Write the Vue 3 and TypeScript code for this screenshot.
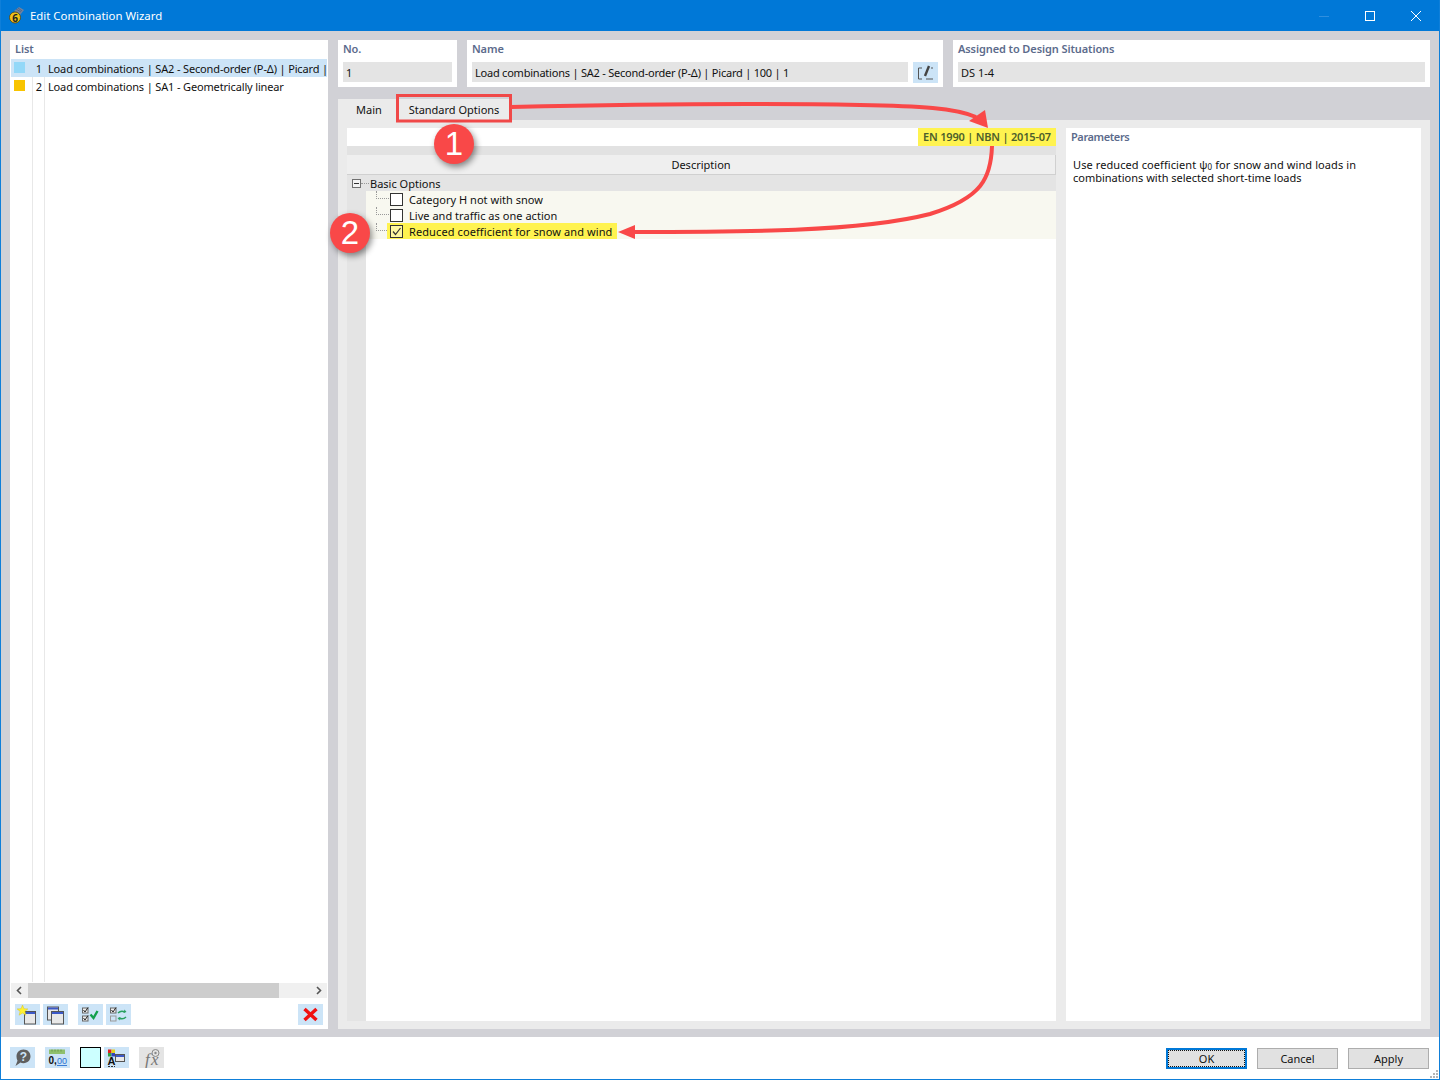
<script setup lang="ts">
const listRows = [
  { no: 1, color: '#93d8f8', text: 'Load combinations | SA2 - Second-order (P-Δ) | Picard |', active: true },
  { no: 2, color: '#f8c400', text: 'Load combinations | SA1 - Geometrically linear', active: false },
]

const options = [
  { text: 'Category H not with snow', checked: false },
  { text: 'Live and traffic as one action', checked: false },
  { text: 'Reduced coefficient for snow and wind', checked: true },
]
</script>

<template>
  <div class="window">
    <header class="titlebar">
      <svg class="app-icon" width="15" height="17" viewBox="0 0 15 17">
        <path d="M5 4L10 0l5 3-4 5z" fill="#71839f" />
        <path d="M7 2l5 3M9 1l4 3" stroke="#3f5478" stroke-width=".6" />
        <circle cx="6" cy="10.500" r="5.500" fill="#f2c21a" stroke="#4d4010" stroke-width=".8" />
        <text x="6" y="14.500" class="app-six">6</text>
      </svg>
      <span class="title">Edit Combination Wizard</span>
      <div class="win-controls">
        <svg width="12" height="12" viewBox="0 0 12 12"><path d="M1 6.500h10" stroke="#2f8fdf" /></svg>
        <svg width="12" height="12" viewBox="0 0 12 12"><rect x="1.500" y="1.500" width="9" height="9" fill="none" stroke="#fff" /></svg>
        <svg width="12" height="12" viewBox="0 0 12 12"><path d="M1 1l10 10M11 1L1 11" stroke="#fff" /></svg>
      </div>
    </header>

    <main class="body">
      <section class="list-panel">
        <div class="label list-label">List</div>
        <div class="list-rows">
          <div class="guide guide-a"></div>
          <div class="guide guide-b"></div>
          <div v-for="row in listRows" :key="row.no" class="list-row" :class="{ active: row.active }">
            <span class="swatch" :style="{ background: row.color }"></span>
            <span class="row-no">{{ row.no }}</span>
            <span class="row-text">{{ row.text }}</span>
          </div>
        </div>
        <div class="hscroll">
          <svg width="17" height="15" viewBox="0 0 17 15"><path d="M10 4L6.500 7.500 10 11" fill="none" stroke="#555" stroke-width="1.600" /></svg>
          <div class="hscroll-track"><div class="hscroll-thumb"></div></div>
          <svg width="17" height="15" viewBox="0 0 17 15"><path d="M7 4l3.500 3.500L7 11" fill="none" stroke="#555" stroke-width="1.600" /></svg>
        </div>
        <div class="list-tools">
          <button class="tool">
            <svg width="21" height="20" viewBox="0 0 21 20">
              <rect x="7.500" y="6.500" width="11" height="12.500" fill="#e8e8e8" stroke="#555" />
              <rect x="8" y="7" width="10" height="2" fill="#3c59c8" />
              <path d="M5.500 0l1.500 3.700 3.900.2-3 2.500 1 3.800-3.400-2.100-3.400 2.100 1-3.800-3-2.500 3.900-.2z" fill="#fff133" stroke="#d2bc10" stroke-width=".4" />
            </svg>
          </button>
          <button class="tool">
            <svg width="21" height="20" viewBox="0 0 21 20">
              <rect x="2.500" y="2" width="11" height="13" fill="#e8e8e8" stroke="#555" />
              <rect x="3" y="2.500" width="10" height="2" fill="#3c59c8" />
              <rect x="6.500" y="6.500" width="12" height="12.500" fill="#e8e8e8" stroke="#555" />
              <rect x="7" y="7" width="11" height="2" fill="#3c59c8" />
            </svg>
          </button>
          <button class="tool tool-gap">
            <svg width="21" height="20" viewBox="0 0 21 20">
              <rect x="2.500" y="3" width="5.500" height="5" fill="#eee" stroke="#666" />
              <path d="M3.500 5l1.500 2 3-4.500" fill="none" stroke="#222" />
              <rect x="2.500" y="11" width="5.500" height="5" fill="#eee" stroke="#666" />
              <path d="M3.500 13l1.500 2 3-4.500" fill="none" stroke="#222" />
              <path d="M10.500 9.500l3 3.500 4-7" fill="none" stroke="#12a04c" stroke-width="2.400" />
            </svg>
          </button>
          <button class="tool">
            <svg width="21" height="20" viewBox="0 0 21 20">
              <rect x="2.500" y="3" width="5.500" height="5" fill="#eee" stroke="#666" />
              <path d="M3.500 5l1.500 2 3-4.500" fill="none" stroke="#222" />
              <rect x="2.500" y="11" width="5.500" height="5" fill="none" stroke="#999" />
              <path d="M10 8c2-2 5-2 7-1M18 12c-2 2-5 2-7 1" fill="none" stroke="#2aa060" stroke-width="1.500" />
              <path d="M16.500 4.500l2 2.500-3 1zM11.500 15.500l-2-2.500 3-1z" fill="#2aa060" />
            </svg>
          </button>
          <button class="tool tool-end">
            <svg width="21" height="20" viewBox="0 0 21 20"><path d="M4.500 4l12 11M16.500 4l-12 11" stroke="#f01010" stroke-width="3.400" /></svg>
          </button>
        </div>
      </section>

      <section class="right">
        <div class="fields">
          <div class="field field-no">
            <div class="label">No.</div>
            <div class="input">1</div>
          </div>
          <div class="field field-name">
            <div class="label">Name</div>
            <div class="input-line">
              <div class="input name-input">Load combinations | SA2 - Second-order (P-Δ) | Picard | 100 | 1</div>
              <button class="tool">
                <svg width="21" height="20" viewBox="0 0 21 20">
                  <path d="M7 5H3.500v11H7M11 16h7" fill="none" stroke="#555" />
                  <path d="M14 3L10 13" stroke="#444" stroke-width="2.400" />
                  <path d="M16 5h2" stroke="#555" />
                </svg>
              </button>
            </div>
          </div>
          <div class="field field-ds">
            <div class="label">Assigned to Design Situations</div>
            <div class="input">DS 1-4</div>
          </div>
        </div>

        <nav class="tabs">
          <div class="tab tab-main">Main</div>
          <div class="tab tab-std">Standard Options</div>
        </nav>

        <div class="tab-page">
          <div class="tree-panel">
            <div class="standard-bar"><span class="standard-tag">EN 1990 | NBN | 2015-07</span></div>
            <div class="gray-bar"></div>
            <div class="col-head">Description</div>
            <div class="tree-body">
              <div class="group-row">
                <span class="expander"></span>
                <span class="dots-h"></span>
                <span>Basic Options</span>
              </div>
              <div class="group-rows">
                <div v-for="opt in options" :key="opt.text" class="opt-row">
                  <span class="dots-row"></span>
                  <span class="opt" :class="{ marked: opt.checked }">
                    <span class="check">
                      <svg v-if="opt.checked" width="11" height="11" viewBox="0 0 11 11"><path d="M2 5.500l2.500 3L9.500 2" fill="none" stroke="#333" stroke-width="1.200" /></svg>
                    </span>
                    <span>{{ opt.text }}</span>
                  </span>
                </div>
              </div>
            </div>
          </div>
          <aside class="params">
            <div class="label">Parameters</div>
            <p class="params-text">Use reduced coefficient ψ<sub>0</sub> for snow and wind loads in<br /><span class="params-line">combinations with selected short-time loads</span></p>
          </aside>
        </div>
      </section>
    </main>

    <footer class="footer">
      <button class="tool">
        <svg width="21" height="20" viewBox="0 0 21 20">
          <path d="M11.500 1.500c4.200 0 7 2.900 7 6.800s-2.900 6.900-7 6.900c-1.200 0-2.200-.2-3-.6L3.500 18l2-5.200c-.6-1.200-1-2.800-1-4.400 0-3.900 2.800-6.900 7-6.900z" fill="#5f5f5f" />
          <text x="11.500" y="13" class="help-mark">?</text>
        </svg>
      </button>
      <button class="tool">
        <svg width="21" height="20" viewBox="0 0 21 20">
          <rect x="2" y="1.500" width="16" height="4.500" fill="#8fc06e" />
          <path d="M5 1.500v2M8 1.500v2M11 1.500v2M14 1.500v2" stroke="#5e8f42" stroke-width=".8" />
          <text x="1.500" y="16" class="num-a">0,</text>
          <text x="10" y="16" class="num-b">00</text>
        </svg>
      </button>
      <span class="color-box"></span>
      <button class="tool tool-tight">
        <svg width="21" height="20" viewBox="0 0 21 20">
          <rect x="2" y="1.500" width="3.500" height="3.500" fill="#e02020" />
          <rect x="5.500" y="1.500" width="3.500" height="3.500" fill="#e0d020" />
          <rect x="2" y="5" width="3.500" height="3.500" fill="#30a040" />
          <rect x="5.500" y="5" width="3.500" height="3.500" fill="#3040c0" />
          <text x="5.500" y="16.500" class="num-c">A</text>
          <path d="M2 18.500h7" stroke="#333" stroke-dasharray="2 1" />
          <rect x="9.500" y="6.500" width="9" height="7" fill="#e8e8e8" stroke="#555" />
          <rect x="10" y="7" width="8" height="2" fill="#3c59c8" />
        </svg>
      </button>
      <button class="tool tool-off">
        <svg width="21" height="20" viewBox="0 0 21 20">
          <text x="4" y="17" class="fx">f</text>
          <text x="10" y="17" class="fx">x</text>
          <circle cx="14.500" cy="5" r="3.500" fill="none" stroke="#888" />
          <circle cx="14.500" cy="5" r="1.200" fill="#888" />
        </svg>
      </button>
      <div class="footer-actions">
        <button class="btn btn-default">OK</button>
        <button class="btn">Cancel</button>
        <button class="btn">Apply</button>
      </div>
      <svg class="grip" width="10" height="10" viewBox="0 0 10 10">
        <path d="M7 1h2v2H7zM4 4h2v2H4zM7 4h2v2H7zM1 7h2v2H1zM4 7h2v2H4zM7 7h2v2H7z" fill="#b5b5b5" />
      </svg>
    </footer>

    <svg class="arrows" width="1440" height="1080" viewBox="0 0 1440 1080">
      <rect x="397.500" y="95.500" width="113" height="25.500" fill="none" stroke="#f04848" stroke-width="3" />
      <path d="M511 107C640 104 760 103 860 105C920 106 955 108 976 117" fill="none" stroke="#f94848" stroke-width="4" />
      <path d="M988 128L969 121 985 110z" fill="#f94848" />
      <path d="M992 146C991 178 982 198 930 214C860 232 740 232 632 232" fill="none" stroke="#f94848" stroke-width="4" />
      <path d="M618 232L635 225V239z" fill="#f94848" />
    </svg>
    <div class="badge badge-1">1</div>
    <div class="badge badge-2">2</div>
  </div>
</template>

<style scoped>
.window {
  position: relative;
  width: 1440px;
  height: 1080px;
  box-sizing: border-box;
  display: flex;
  flex-direction: column;
  border: 1px solid #0f7fd9;
  border-top: none;
  background: #d1d1d6;
  font-family: "Noto Sans", "Liberation Sans", sans-serif;
  font-size: 11px;
  color: #111;
  overflow: hidden;
}

.titlebar {
  height: 31px;
  flex: none;
  margin: 0 -1px;
  display: flex;
  align-items: center;
  background: #0078d7;
  color: #fff;
  padding-left: 9px;
}

.app-icon {
  margin-right: 6px;
}

.app-six {
  font-size: 10px;
  font-weight: 700;
  text-anchor: middle;
  fill: #222;
}

.title {
  font-size: 11.4px;
}

.win-controls {
  margin-left: auto;
  display: flex;
  gap: 34px;
  padding-right: 18px;
}

.body {
  flex: 1;
  min-height: 0;
  display: flex;
  gap: 10px;
  padding: 9px 9px 8px;
}

.label {
  font-weight: 600;
  color: #5c6b8c;
  line-height: 18px;
  padding-left: 5px;
  letter-spacing: -0.1px;
}

.list-panel {
  width: 318px;
  flex: none;
  display: flex;
  flex-direction: column;
  background: #fff;
}

.list-label {
  height: 19px;
}

.list-rows {
  position: relative;
  flex: 1;
  padding: 0 1px;
}

.guide {
  position: absolute;
  top: 0;
  bottom: 0;
  width: 1px;
  background: #e8e8e8;
}

.guide-a {
  left: 22px;
}

.guide-b {
  left: 34px;
}

.list-row {
  position: relative;
  height: 18px;
  display: flex;
  align-items: center;
  white-space: nowrap;
  overflow: hidden;
}

.list-row.active {
  background: #cce4f7;
}

.swatch {
  width: 11px;
  height: 11px;
  margin: -1px 0 0 3px;
  flex: none;
}

.row-no {
  width: 17px;
  flex: none;
  text-align: right;
}

.row-text {
  margin-left: 6px;
  letter-spacing: -0.15px;
}

.hscroll {
  height: 15px;
  margin: 1px 1px 0;
  flex: none;
  display: flex;
  background: #f0f0f0;
}

.hscroll-track {
  flex: 1;
}

.hscroll-thumb {
  width: 251px;
  height: 100%;
  background: #cdcdcd;
}

.list-tools {
  height: 31px;
  flex: none;
  box-sizing: border-box;
  display: flex;
  align-items: flex-start;
  gap: 3px;
  padding: 6px 5px 0;
}

.tool {
  width: 25px;
  height: 21px;
  flex: none;
  padding: 0;
  border: none;
  background: #cce4f7;
  display: flex;
  align-items: center;
  justify-content: center;
}

.tool-gap {
  margin-left: 7px;
}

.tool-end {
  margin-left: auto;
}

.right {
  flex: 1;
  min-width: 0;
  display: flex;
  flex-direction: column;
}

.fields {
  display: flex;
  gap: 10px;
  height: 47px;
  flex: none;
}

.field {
  background: #fff;
  padding: 0 5px;
  box-sizing: border-box;
}

.field .label {
  height: 22px;
  line-height: 18px;
  padding-left: 0;
}

.field-no {
  width: 119px;
}

.field-name {
  width: 476px;
}

.field-ds {
  flex: 1;
}

.input {
  height: 20px;
  line-height: 22px;
  padding-left: 3px;
  background: #e4e4e4;
  white-space: nowrap;
}

.input-line {
  display: flex;
  gap: 5px;
}

.name-input {
  flex: 1;
  letter-spacing: -0.22px;
}

.tabs {
  height: 33px;
  flex: none;
  display: flex;
  align-items: flex-end;
}

.tab {
  height: 21px;
  line-height: 21px;
  text-align: center;
  background: #ebebeb;
}

.tab-main {
  width: 59px;
  padding-left: 3px;
  box-sizing: border-box;
}

.tab-std {
  width: 114px;
}

.tab-page {
  flex: 1;
  min-height: 0;
  display: flex;
  gap: 10px;
  padding: 8px 9px;
  background: #ebebeb;
}

.tree-panel {
  width: 709px;
  flex: none;
  display: flex;
  flex-direction: column;
  background: #fff;
}

.standard-bar {
  height: 18px;
  flex: none;
  display: flex;
  justify-content: flex-end;
}

.standard-tag {
  width: 138px;
  box-sizing: border-box;
  text-align: center;
  line-height: 18px;
  background: #fff350;
  color: #4d5f2c;
  font-weight: 600;
  letter-spacing: -0.2px;
}

.gray-bar {
  height: 9px;
  flex: none;
  background: #e2e2e2;
}

.col-head {
  height: 20px;
  flex: none;
  box-sizing: border-box;
  text-align: center;
  line-height: 19px;
  background: #efefef;
  border-bottom: 1px solid #d0d0d0;
  border-right: 1px solid #d0d0d0;
}

.tree-body {
  flex: 1;
  background: linear-gradient(to right, #e4e4e4 19px, #fff 19px);
}

.group-row {
  height: 16px;
  display: flex;
  align-items: center;
  background: #e4e4e4;
}

.expander {
  position: relative;
  width: 9px;
  height: 9px;
  margin-left: 5px;
  flex: none;
  box-sizing: border-box;
  border: 1px solid #707070;
  background: #f4f4f4;
}

.expander::after {
  content: "";
  position: absolute;
  left: 1px;
  right: 1px;
  top: 3px;
  height: 1px;
  background: #333;
}

.dots-h {
  width: 8px;
  margin-right: 1px;
  border-top: 1px dotted #999;
}

.group-rows {
  margin-left: 19px;
  background: #f8f8f0;
}

.opt-row {
  position: relative;
  height: 16px;
  display: flex;
  align-items: center;
}

.dots-row {
  width: 13px;
  margin-left: 10px;
  height: 8px;
  margin-top: -8px;
  box-sizing: border-box;
  border-left: 1px dotted #999;
  border-bottom: 1px dotted #999;
  flex: none;
}

.opt {
  height: 16px;
  display: flex;
  align-items: center;
  padding: 0 5px 0 3px;
  margin-left: -2px;
  white-space: nowrap;
  letter-spacing: 0.03px;
}

.opt.marked {
  background: #fff350;
  letter-spacing: 0.1px;
}

.check {
  width: 13px;
  height: 13px;
  box-sizing: border-box;
  border: 1px solid #333;
  background: #fff;
  margin-right: 6px;
  display: flex;
  align-items: center;
  justify-content: center;
}

.marked .check {
  background: #fff8a0;
}

.params {
  flex: 1;
  background: #fff;
}

.params .label {
  padding: 0 5px;
  height: 18px;
  letter-spacing: -0.4px;
}

.params-text {
  margin: 12px 0 0 7px;
  line-height: 13px;
  letter-spacing: 0.09px;
}

.params-line {
  letter-spacing: 0;
}

.params-text sub {
  font-size: 8px;
  line-height: 0;
  vertical-align: -1px;
}

.footer {
  position: relative;
  height: 42px;
  flex: none;
  display: flex;
  align-items: flex-start;
  box-sizing: border-box;
  padding: 10px 0 0 9px;
  gap: 10px;
  background: #fff;
}

.color-box {
  width: 21px;
  height: 21px;
  flex: none;
  box-sizing: border-box;
  border: 1px solid #000;
  background: #ccffff;
}

.tool-tight {
  margin-left: -7px;
}

.tool-off {
  background: #e4e4e4;
}

.footer-actions {
  margin-left: auto;
  display: flex;
  gap: 10px;
  padding: 1px 10px 0 0;
}

.btn {
  width: 81px;
  height: 21px;
  padding: 0;
  box-sizing: border-box;
  border: 1px solid #adadad;
  background: #e1e1e1;
  font: inherit;
  color: #111;
}

.btn-default {
  border: 2px solid #0078d7;
  outline: 1px dotted #111;
  outline-offset: -3px;
}

.grip {
  position: absolute;
  right: 0;
  bottom: 0;
}

.help-mark {
  font-size: 12px;
  font-weight: 700;
  text-anchor: middle;
  fill: #cce4f7;
}

.num-a {
  font-size: 10px;
  font-weight: 700;
  fill: #111;
}

.num-b {
  font-size: 9px;
  fill: #2a6fd0;
  text-decoration: underline;
}

.num-c {
  font-size: 11px;
  font-weight: 700;
  text-anchor: middle;
  fill: #111;
}

.fx {
  font-family: "Liberation Serif", serif;
  font-style: italic;
  font-size: 17px;
  fill: #777;
}

.arrows {
  position: absolute;
  left: -1px;
  top: 0;
  pointer-events: none;
}

.badge {
  position: absolute;
  width: 40px;
  height: 40px;
  border-radius: 50%;
  background: #f94848;
  color: #fff;
  font-family: "Liberation Sans", sans-serif;
  font-size: 33px;
  line-height: 40px;
  text-align: center;
  box-shadow: 2px 3px 6px rgba(0, 0, 0, 0.45);
}

.badge-1 {
  left: 433px;
  top: 124px;
}

.badge-2 {
  left: 329px;
  top: 213px;
}
</style>

<style>
html,
body {
  margin: 0;
}
</style>
